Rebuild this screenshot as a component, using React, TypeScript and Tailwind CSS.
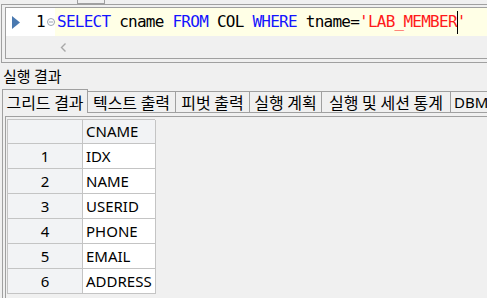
import { FC, ReactNode } from 'react';

const rows = ['IDX', 'NAME', 'USERID', 'PHONE', 'EMAIL', 'ADDRESS'];

const tabs = [
  { label: '텍스트 출력', w: 'w-[88px]' },
  { label: '피벗 출력', w: 'w-[74px]' },
  { label: '실행 계획', w: 'w-[72px]' },
  { label: '실행 및 세션 통계', w: 'w-[129px]' },
];

const App: FC = (): ReactNode => {
  return (
    <div className="h-[298px] w-[487px] overflow-hidden bg-[#f0f0f0] font-['Noto_Sans_CJK_KR',sans-serif] text-black">
      {/* top strip */}
      <div className="flex h-[4px]">
        <div className="ml-[77px] h-[4px] w-[28px] border-x border-b border-[#a0a0a0]" />
      </div>

      {/* editor */}
      <div className="ml-[1px] w-[520px] border border-[#a0a0a0] pb-[3px] pl-[3px] pt-[2px]">
        <div className="border border-[#a0a0a0]">
          <div className="flex h-[28px]">
            <div className="flex w-[49px] items-center bg-white pl-[6px]">
              <svg width="8" height="13" viewBox="0 0 8 13">
                <path d="M0 0 L8 6.5 L0 13 Z" fill="#4a79b0" />
              </svg>
              <span className="ml-[16px] w-[11px] font-['DejaVu_Sans_Mono',monospace] text-[16px] leading-none">
                1
              </span>
              <svg width="8" height="8" viewBox="0 0 8 8">
                <circle cx="4" cy="4" r="3.5" fill="none" stroke="#9aa4b0" />
                <path d="M2 4 H6" stroke="#9aa4b0" />
              </svg>
            </div>
            <div className="flex flex-1 items-center bg-[#ffffe6] pl-[2px] font-['DejaVu_Sans_Mono',monospace] text-[16px] tracking-[-0.75px] whitespace-pre">
              <span className="text-[#1414ff]">SELECT</span>
              <span> cname </span>
              <span className="text-[#1414ff]">FROM</span>
              <span> COL </span>
              <span className="text-[#1414ff]">WHERE</span>
              <span> tname=</span>
              <span className="text-[#ff1a1a]">'LAB_MEMBER</span>
              <span className="relative text-[#ff1a1a]">
                '
                <span className="absolute bottom-[0px] left-[0px] top-[1px] w-px bg-black" />
              </span>
            </div>
          </div>
          <div className="flex h-[22px] items-center pl-[54px]">
            <svg width="7" height="9" viewBox="0 0 7 9">
              <path d="M5.5 0.5 L1.5 4.5 L5.5 8.5" fill="none" stroke="#a8a8a8" strokeWidth="1.4" />
            </svg>
          </div>
        </div>
      </div>

      {/* result label */}
      <div className="flex h-[26px] items-center pl-[3px] text-[15px]">실행 결과</div>

      {/* tabs */}
      <div className="flex h-[24px] items-end pl-[2px] text-[16px]">
        <div className="flex h-[24px] w-[86px] items-center justify-center whitespace-nowrap border-x border-t border-[#a0a0a0] bg-[#f0f0f0]">
          그리드 결과
        </div>
        {tabs.map((t) => (
          <div
            key={t.label}
            className={`flex h-[22px] ${t.w} items-center justify-center whitespace-nowrap border-b border-r border-t border-[#a0a0a0] bg-[#f0f0f0]`}
          >
            {t.label}
          </div>
        ))}
        <div className="flex h-[22px] min-w-0 flex-1 items-center overflow-hidden whitespace-nowrap border-b border-t border-[#a0a0a0] pl-[3px] font-['Noto_Sans',sans-serif] text-[15px]">
          DBM
        </div>
      </div>

      {/* result panel */}
      <div className="ml-[2px] h-[200px] border-l border-[#a0a0a0] pl-[2px] pt-[3px]">
        <div className="h-full border-l border-t border-[#a0a0a0] pl-[1px] pt-[2px]">
          <div className="grid w-[148px] grid-cols-[75px_73px] border-l border-t border-[#c4c4c4] font-['Noto_Sans',sans-serif] text-[15px]">
            <div className="h-[24px] border-b border-r border-[#c4c4c4] bg-[#f2f3f5]" />
            <div className="flex h-[24px] items-center border-b border-r border-[#c4c4c4] bg-[#f2f3f5] pl-[3px]">
              CNAME
            </div>
            {rows.map((r, i) => (
              <div key={r} className="contents">
                <div className="flex h-[25px] items-center justify-center border-b border-r border-[#c4c4c4] bg-[#f2f3f5]">
                  {i + 1}
                </div>
                <div className="flex h-[25px] items-center border-b border-r border-[#c4c4c4] bg-white pl-[3px]">
                  {r}
                </div>
              </div>
            ))}
          </div>
        </div>
      </div>
    </div>
  );
};

export default App;
